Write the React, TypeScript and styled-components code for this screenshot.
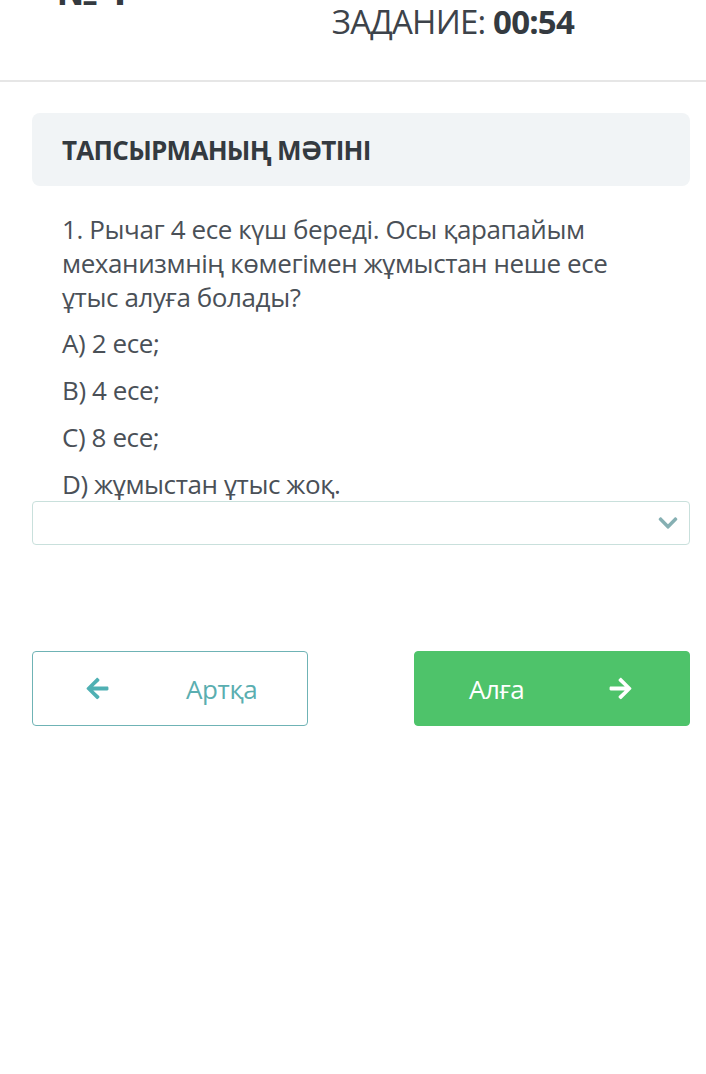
import styled, { createGlobalStyle } from 'styled-components'
import { FaArrowLeft, FaArrowRight, FaChevronDown } from 'react-icons/fa'

const GlobalStyle = createGlobalStyle`
  body {
    margin: 0;
    background: #fff;
    font-family: "Open Sans", "Noto Sans", sans-serif;
    color: #3d434a;
  }
`

const Page = styled.div`
  width: 706px;
  overflow: hidden;
`

const TopBar = styled.div`
  height: 80px;
  border-bottom: 2px solid #e6e6e6;
  display: flex;
  justify-content: space-between;
  padding: 0 132px 0 57px;
`

const Number = styled.div`
  font-size: 40px;
  font-weight: 700;
  color: #343a40;
  line-height: 1;
  margin-top: -30px;
  letter-spacing: -1px;
`

const Timer = styled.div`
  font-size: 33px;
  line-height: 1;
  margin-top: 5px;
  letter-spacing: -0.8px;
  color: #3d434a;

  b {
    font-weight: 700;
    color: #343a40;
  }
`

const Content = styled.div`
  padding: 31px 16px 0 32px;
`

const CardHead = styled.div`
  background: #f1f4f6;
  border-radius: 8px;
  height: 73px;
  display: flex;
  align-items: center;
  padding: 0 30px;
  font-size: 26px;
  font-weight: 700;
  color: #343a40;
  letter-spacing: -0.7px;
`

const Body = styled.div`
  padding: 26px 40px 0 30px;
  font-size: 26px;
  color: #4a5057;
  letter-spacing: -0.4px;
`

const Question = styled.p`
  margin: 0 0 12px;
  line-height: 34px;
`

const Option = styled.p`
  margin: 0 0 13px;
  line-height: 34px;

  &:last-child {
    margin-bottom: 0;
  }
`

const Select = styled.div`
  height: 42px;
  border: 1px solid #c9e0dc;
  border-radius: 4px;
  display: flex;
  align-items: center;
  justify-content: flex-end;
  padding-right: 10px;
  color: #86b0b3;
  font-size: 22px;
`

const Buttons = styled.div`
  display: flex;
  justify-content: space-between;
  margin-top: 106px;
`

const Button = styled.div<{ $primary?: boolean }>`
  width: 276px;
  height: 75px;
  box-sizing: border-box;
  border-radius: 4px;
  display: flex;
  align-items: center;
  font-size: 26px;
  letter-spacing: -0.4px;
  background: ${p => (p.$primary ? '#4ec36a' : '#fff')};
  color: ${p => (p.$primary ? '#fff' : '#5aaeb0')};
  border: 1px solid ${p => (p.$primary ? '#4ec36a' : '#6fb3b5')};
`

const BackInner = styled.div`
  display: flex;
  align-items: center;
  padding-left: 52px;
  gap: 76px;
  svg { font-size: 25px; color: #4fb0b3; }
`

const NextInner = styled.div`
  display: flex;
  align-items: center;
  padding-left: 54px;
  gap: 84px;
  svg { font-size: 25px; color: #fff; }
`

export default function App() {
  return (
    <Page>
      <GlobalStyle />
      <TopBar>
        <Number>№ 1</Number>
        <Timer>ЗАДАНИЕ: <b>00:54</b></Timer>
      </TopBar>
      <Content>
        <CardHead>ТАПСЫРМАНЫҢ МӘТІНІ</CardHead>
        <Body>
          <Question>
            1. Рычаг 4 есе күш береді. Осы қарапайым механизмнің көмегімен жұмыстан неше есе ұтыс алуға болады?
          </Question>
          <Option>A) 2 есе;</Option>
          <Option>B) 4 есе;</Option>
          <Option>C) 8 есе;</Option>
          <Option>D) жұмыстан ұтыс жоқ.</Option>
        </Body>
        <Select>
          <FaChevronDown />
        </Select>
        <Buttons>
          <Button>
            <BackInner>
              <FaArrowLeft />
              <span>Артқа</span>
            </BackInner>
          </Button>
          <Button $primary>
            <NextInner>
              <span>Алға</span>
              <FaArrowRight />
            </NextInner>
          </Button>
        </Buttons>
      </Content>
    </Page>
  )
}
